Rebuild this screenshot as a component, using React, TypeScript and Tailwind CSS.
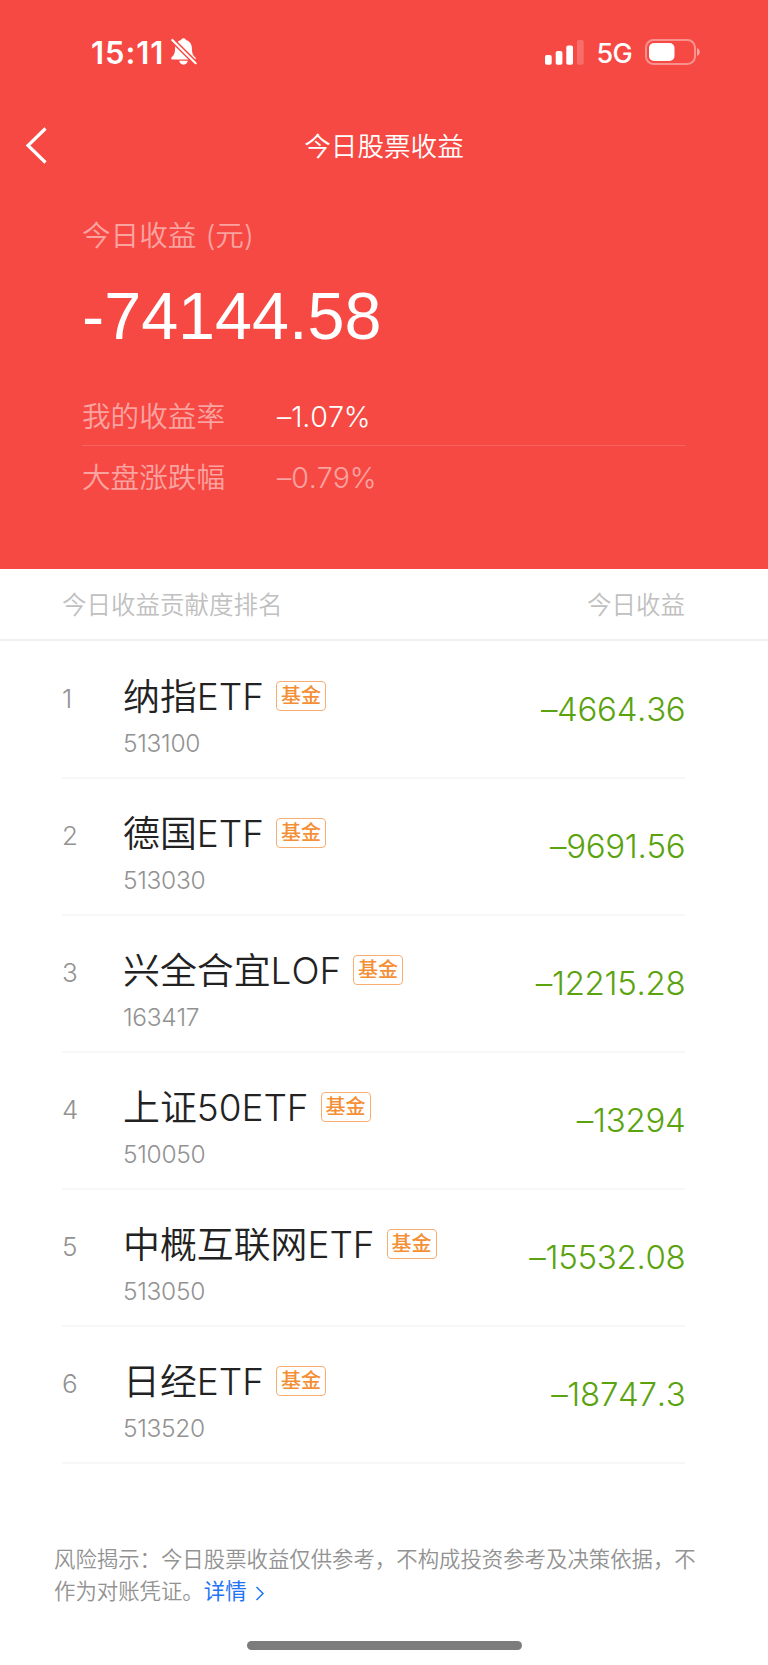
interface Holding {
  name: string;
  code: string;
  profit: string;
}

const holdings: Holding[] = [
  { name: '纳指ETF', code: '513100', profit: '–4664.36' },
  { name: '德国ETF', code: '513030', profit: '–9691.56' },
  { name: '兴全合宜LOF', code: '163417', profit: '–12215.28' },
  { name: '上证50ETF', code: '510050', profit: '–13294' },
  { name: '中概互联网ETF', code: '513050', profit: '–15532.08' },
  { name: '日经ETF', code: '513520', profit: '–18747.3' },
];

function StatusBar() {
  return (
    <div className="flex h-[104px] items-center justify-between pl-[91px] pr-[67px]">
      <div className="flex items-center">
        <span className="text-[31px] font-semibold leading-none tracking-[0.9px]">15:11</span>
        <svg className="ml-[7px] h-[28px] w-[26px]" viewBox="0 0 26 28" fill="currentColor">
          <path d="M12.500.2c1.300 0 2.200.7 2.400 1.800 3.500 1 5.900 3.900 6 8 .1 5.100.7 7 3.300 9.200 1 1 .6 2.300-.7 2.300H1.500C.2 21.500-.2 20.300.7 19.300 3.300 16.600 4 15 4.100 10c.1-4.100 2.500-7 6-8C10.300.9 11.200.2 12.500.2z" />
          <path d="M8.200 22.800h8.600c-.3 2.300-2 3.900-4.300 3.900s-4-1.600-4.300-3.900z" />
          <path d="M0 .6L26 26.600" stroke="#f64944" strokeWidth="5" />
          <path d="M1.300 2L24.600 25.200" stroke="currentColor" strokeWidth="2.200" strokeLinecap="round" />
        </svg>
      </div>
      <div className="flex items-center">
        <svg className="h-[25px] w-[39px]" viewBox="0 0 39 25" fill="currentColor">
          <rect x="0" y="15" width="6.700" height="9.700" rx="1.800" />
          <rect x="10.700" y="11" width="6.700" height="13.700" rx="1.800" />
          <rect x="21.300" y="5.500" width="6.700" height="19.200" rx="1.800" />
          <rect x="32" y="0" width="6.700" height="24.700" rx="1.800" opacity="0.2" />
        </svg>
        <span className="ml-[13px] pt-[3px] text-[27px] font-medium leading-none tracking-[-0.7px]">5G</span>
        <svg className="ml-[13px] h-[26px] w-[56px]" viewBox="0 0 56 26" fill="none">
          <rect x="1" y="1" width="49" height="24" rx="7.500" stroke="white" strokeOpacity="0.4" strokeWidth="2" />
          <rect x="4" y="4" width="25.500" height="18" rx="5" fill="white" />
          <path d="M52 9v8c1.700-.7 2.800-2.200 2.800-4s-1.100-3.300-2.800-4z" fill="white" fillOpacity="0.5" />
        </svg>
      </div>
    </div>
  );
}

function Summary() {
  return (
    <section className="h-[569px] bg-[#f64944] text-white">
      <StatusBar />
      <div className="relative flex h-[82px] items-center justify-center">
        <svg className="absolute left-[25px] top-[23px] h-[37px] w-[24px]" viewBox="0 0 24 37" fill="none">
          <path d="M20.500 1.500L3 18.500L20.500 35.500" stroke="white" strokeWidth="3.200" />
        </svg>
        <h1 className="pt-px text-[26.6px] leading-10">今日股票收益</h1>
      </div>
      <div className="pl-[82px] pr-[83px]">
        <p className="mt-[30px] text-[28.6px] leading-10 text-white/50">
          今日收益<span className="ml-[9px]">(元)</span>
        </p>
        <p className="mt-[25px] font-['Liberation_Sans',sans-serif] text-[66.5px] font-normal leading-[70px]">-74144.58</p>
        <div className="mt-[34px] flex h-[61px] items-center border-b border-white/15 pt-[4px] text-[28.6px]">
          <span className="w-[195px] text-white/50">我的收益率</span>
          <span className="tracking-[-0.1px]">–1.07%</span>
        </div>
        <div className="flex h-[62px] items-center pt-[2px] text-[28.6px] text-white/50">
          <span className="w-[195px]">大盘涨跌幅</span>
          <span className="tracking-[-0.1px]">–0.79%</span>
        </div>
      </div>
    </section>
  );
}

function HoldingRow({ holding, rank }: { holding: Holding; rank: number }) {
  return (
    <li className="flex h-[137px] items-center border-b-2 border-[#f7f7f7]">
      <span className="mb-[23px] w-[61px] text-[26px] text-[#929292]">{rank}</span>
      <div className="flex-1 pt-[19px]">
        <div className="flex items-center">
          <span className="text-[36.9px] leading-[48px] text-[#222]">{holding.name}</span>
          <span className="mb-[2px] ml-3 flex h-[30px] w-[50px] items-center justify-center rounded-[4px] border border-[#f8ae73] text-[20px] font-medium text-[#f48f36]">
            基金
          </span>
        </div>
        <p className="text-[24.5px] leading-[44px] tracking-[-0.3px] text-[#929292]">{holding.code}</p>
      </div>
      <span className="-mr-[0.4px] text-[33px] tracking-[-0.3px] text-[#5aa30f]">{holding.profit}</span>
    </li>
  );
}

export default function App() {
  return (
    <main
      lang="zh-CN"
      className="flex h-[1665px] w-[768px] flex-col overflow-hidden bg-white font-['Inter','Noto_Sans_CJK_SC',sans-serif] font-[350] [font-feature-settings:'calt'_0] [font-kerning:none]"
    >
      <Summary />
      <div className="flex h-[72px] items-center justify-between border-b-2 border-[#f0f0f0] pl-[62px] pr-[83px] pt-[2px] text-[24.5px] text-[#c0c0c0]">
        <span>今日收益贡献度排名</span>
        <span>今日收益</span>
      </div>
      <ul className="pl-[62px] pr-[83px] pt-px">
        {holdings.map((holding, index) => (
          <HoldingRow key={holding.code} holding={holding} rank={index + 1} />
        ))}
      </ul>
      <p className="ml-[54px] mt-[79px] w-[660px] text-[21.4px] leading-8 text-[#929292]">
        风险揭示：今日股票收益仅供参考，不构成投资参考及决策依据，不
        <br />
        作为对账凭证。
        <a className="font-normal text-[#1f74f5]">
          详情
          <svg className="ml-2 inline h-[15px] w-[10px]" viewBox="0 0 10 15" fill="none" stroke="currentColor" strokeWidth="1.5">
            <path d="M1.500 1L8 7.500L1.500 14" />
          </svg>
        </a>
      </p>
      <div className="mx-auto mt-[34px] h-[9px] w-[275px] rounded-full bg-[#7c7c7c]" />
    </main>
  );
}
